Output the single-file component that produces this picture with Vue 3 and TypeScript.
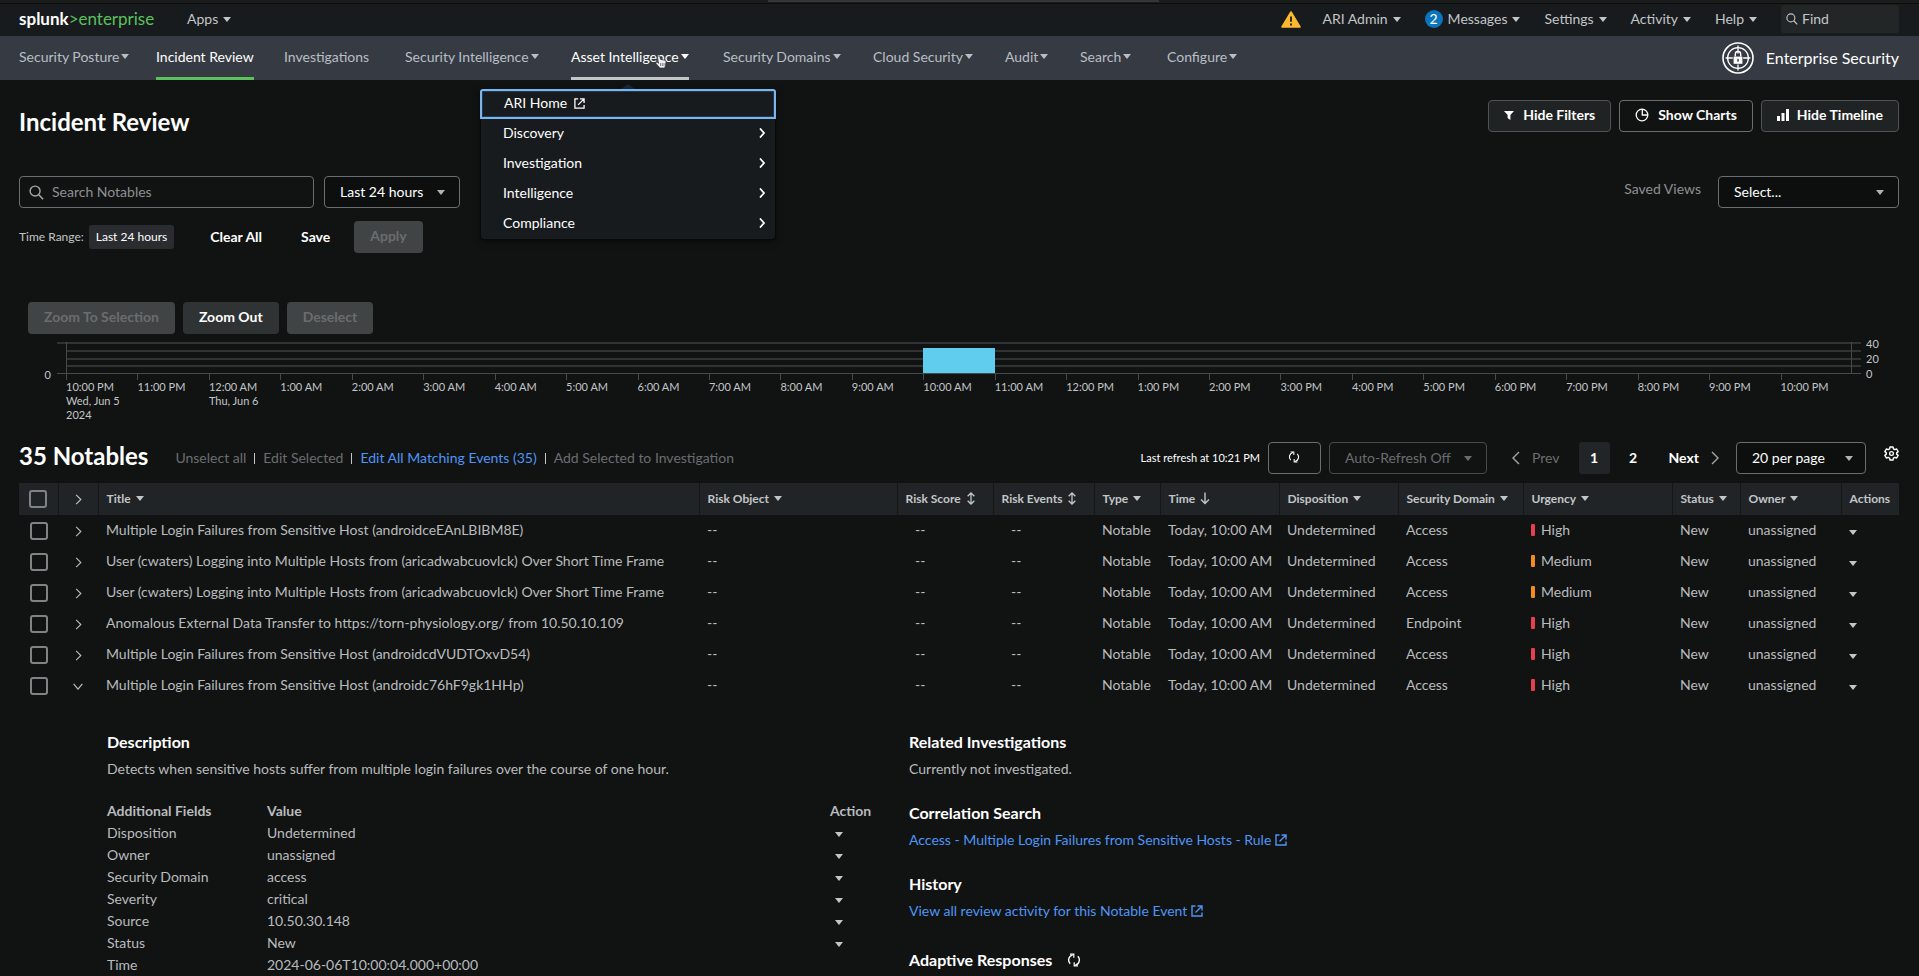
<script setup lang="ts">
import { ref } from 'vue'

interface MenuEntry { label: string; caret: boolean; state?: 'current' | 'open' }
interface Notable { title: string; domain: string; urgency: 'High' | 'Medium'; open?: boolean }
interface Column { label: string; sort?: 'caret' | 'both' | 'down' }

const accountMenus: string[] = ['Settings', 'Activity', 'Help']

const appMenus: MenuEntry[] = [
  { label: 'Security Posture', caret: true },
  { label: 'Incident Review', caret: false, state: 'current' },
  { label: 'Investigations', caret: false },
  { label: 'Security Intelligence', caret: true },
  { label: 'Asset Intelligence', caret: true, state: 'open' },
  { label: 'Security Domains', caret: true },
  { label: 'Cloud Security', caret: true },
  { label: 'Audit', caret: true },
  { label: 'Search', caret: true },
  { label: 'Configure', caret: true },
]

const submenu: string[] = ['Discovery', 'Investigation', 'Intelligence', 'Compliance']

const hours: string[][] = Array.from({ length: 25 }, (_, i) => {
  const h = (22 + i) % 24
  const label = `${h % 12 === 0 ? 12 : h % 12}:00 ${h < 12 ? 'AM' : 'PM'}`
  if (i === 0) return [label, 'Wed, Jun 5', '2024']
  if (i === 2) return [label, 'Thu, Jun 6']
  return [label]
})
const bar = { hour: 12, count: 32, max: 40 }

const columns: Column[] = [
  { label: 'Title', sort: 'caret' },
  { label: 'Risk Object', sort: 'caret' },
  { label: 'Risk Score', sort: 'both' },
  { label: 'Risk Events', sort: 'both' },
  { label: 'Type', sort: 'caret' },
  { label: 'Time', sort: 'down' },
  { label: 'Disposition', sort: 'caret' },
  { label: 'Security Domain', sort: 'caret' },
  { label: 'Urgency', sort: 'caret' },
  { label: 'Status', sort: 'caret' },
  { label: 'Owner', sort: 'caret' },
  { label: 'Actions' },
]

const notables: Notable[] = [
  { title: 'Multiple Login Failures from Sensitive Host (androidceEAnLBIBM8E)', domain: 'Access', urgency: 'High' },
  { title: 'User (cwaters) Logging into Multiple Hosts from (aricadwabcuovlck) Over Short Time Frame', domain: 'Access', urgency: 'Medium' },
  { title: 'User (cwaters) Logging into Multiple Hosts from (aricadwabcuovlck) Over Short Time Frame', domain: 'Access', urgency: 'Medium' },
  { title: 'Anomalous External Data Transfer to https://torn-physiology.org/ from 10.50.10.109', domain: 'Endpoint', urgency: 'High' },
  { title: 'Multiple Login Failures from Sensitive Host (androidcdVUDTOxvD54)', domain: 'Access', urgency: 'High' },
  { title: 'Multiple Login Failures from Sensitive Host (androidc76hF9gk1HHp)', domain: 'Access', urgency: 'High', open: true },
]

const fields: [string, string][] = [
  ['Disposition', 'Undetermined'],
  ['Owner', 'unassigned'],
  ['Security Domain', 'access'],
  ['Severity', 'critical'],
  ['Source', '10.50.30.148'],
  ['Status', 'New'],
  ['Time', '2024-06-06T10:00:04.000+00:00'],
]

const search = ref('')
const find = ref('')
</script>

<template>
  <svg class="sprite" aria-hidden="true">
    <symbol id="i-search" viewBox="0 0 16 16"><circle cx="6.5" cy="6.5" r="5.3" fill="none" stroke="currentColor" stroke-width="1.5" /><path d="M10.4 10.4 15 15.2" stroke="currentColor" stroke-width="1.7" /></symbol>
    <symbol id="i-right" viewBox="0 0 8 14"><path d="M1 1l6 6-6 6" fill="none" stroke="currentColor" stroke-width="1.4" /></symbol>
    <symbol id="i-right-bold" viewBox="0 0 6 10"><path d="M1 0.500l4 4.500-4 4.500" fill="none" stroke="currentColor" stroke-width="1.800" /></symbol>
    <symbol id="i-left" viewBox="0 0 8 14"><path d="M7 1L1 7l6 6" fill="none" stroke="currentColor" stroke-width="1.4" /></symbol>
    <symbol id="i-down" viewBox="0 0 12 8"><path d="M1 1l5 6 5-6" fill="none" stroke="currentColor" stroke-width="1.4" /></symbol>
    <symbol id="i-external" viewBox="0 0 12 12"><path d="M4.5 1H1v10h10V7.5M6.5 1H11v4.5M11 1 4.5 7.5" fill="none" stroke="currentColor" stroke-width="1.4" /></symbol>
    <symbol id="i-refresh" viewBox="0 0 14 14"><path d="M8.3 12.2A5.3 5.3 0 0 0 10.8 3.3M5.7 1.8A5.3 5.3 0 0 0 3.2 10.7" fill="none" stroke="currentColor" stroke-width="1.3" /><path d="M3 1.2h3.8v3.6M11 12.8H7.2V9.2" fill="none" stroke="currentColor" stroke-width="1.2" /></symbol>
    <symbol id="i-both" viewBox="0 0 10 14"><path d="M5 1v12M1.4 4.6 5 1l3.6 3.6M1.4 9.4 5 13l3.6-3.6" fill="none" stroke="currentColor" stroke-width="1.4" /></symbol>
    <symbol id="i-arrow" viewBox="0 0 10 12"><path d="M5 0v11M1 7l4 4 4-4" fill="none" stroke="currentColor" stroke-width="1.4" /></symbol>
    <symbol id="i-gear" viewBox="0 0 16 16"><path d="M6.4 1h3.2l.4 2 1.5.9 2-.7 1.6 2.8-1.6 1.3v1.4l1.6 1.3-1.6 2.8-2-.7-1.5.9-.4 2H6.4l-.4-2-1.500-.9-2 .7L.9 10l1.600-1.300V7.300L.9 6l1.600-2.800 2 .7L6 3z" fill="none" stroke="currentColor" stroke-width="1.5" stroke-linejoin="round" /><circle cx="8" cy="8" r="2" fill="none" stroke="currentColor" stroke-width="1.4" /></symbol>
  </svg>

  <div class="strip"><span class="strip-tab"></span></div>

  <header class="topbar">
    <a class="logo" href="#"><b>splunk</b><span>&gt;enterprise</span></a>
    <button class="menu" type="button">Apps <i class="caret"></i></button>
    <div class="account">
      <svg class="warning" viewBox="0 0 20 17" role="img" aria-label="Warning"><path d="M10 1 19 16H1z" fill="#fdb92e" stroke="#fdb92e" stroke-width="1.6" stroke-linejoin="round" /><path d="M10 5.5v5.2M10 12.4v2" stroke="#22262a" stroke-width="1.9" /></svg>
      <button class="menu" type="button">ARI Admin <i class="caret"></i></button>
      <button class="menu" type="button"><span class="badge">2</span>Messages <i class="caret"></i></button>
      <button v-for="m in accountMenus" :key="m" class="menu" type="button">{{ m }} <i class="caret"></i></button>
      <label class="find"><svg class="ic12"><use href="#i-search" /></svg><input v-model="find" type="text" placeholder="Find" aria-label="Find" /></label>
    </div>
  </header>

  <nav class="appbar">
    <ul class="tabs">
      <li v-for="m in appMenus" :key="m.label" :class="['tab', m.state]">
        <a href="#">{{ m.label }}<i v-if="m.caret" class="caret"></i></a>
        <div v-if="m.state === 'open'" class="dropdown">
          <a class="drop-home" href="#">ARI Home <svg class="ic11"><use href="#i-external" /></svg></a>
          <button v-for="s in submenu" :key="s" class="drop-item" type="button">{{ s }}<svg class="chev-s"><use href="#i-right-bold" /></svg></button>
        </div>
        <svg v-if="m.state === 'open'" class="pointer" viewBox="0 0 12 14" aria-hidden="true"><path d="M3.2 1.2c.7-.5 1.4-.1 1.7.6l.7 2.6 4.3.9c.8.2 1.2.8 1.1 1.6l-.6 4L9.6 13H4.9L1 8.4c-.4-.7.5-1.5 1.3-1l1.3.9L2.6 2.3c-.1-.5.1-.9.6-1.1z" fill="#f2f2f2" stroke="#33373c" stroke-width=".7" /><path d="M5.6 8v3M7.3 8v3M9 8v3" stroke="#555" stroke-width=".7" /></svg>
      </li>
    </ul>
    <a class="product" href="#">
      <svg class="product-icon" viewBox="0 0 32 32" fill="none" stroke="#fff"><circle cx="16" cy="16" r="15" stroke-width="1.6" /><circle cx="16" cy="16" r="10.4" stroke-width="1.3" /><path d="M16 3.6v8M16 22v6.4M3.6 16H12M20 16h8.4" stroke-width="1.3" /><rect x="10.8" y="12" width="10.4" height="10.5" fill="#363b43" stroke="none" /><path d="M13.3 14.6v-2.4a2.7 2.7 0 0 1 5.4 0v2.4" stroke-width="1.4" /><rect x="11.6" y="14.6" width="8.8" height="7.2" fill="#fff" stroke="none" /><path d="M16 16.8v3" stroke="#363b43" stroke-width="1.4" /></svg>
      Enterprise Security
    </a>
  </nav>

  <main class="page">
    <div class="head">
      <h1>Incident Review</h1>
      <div class="head-actions">
        <button class="btn soft" type="button"><svg class="ic10" viewBox="0 0 10 10"><path d="M0 1h10L6.4 5v5L3.6 8V5z" fill="currentColor" /></svg>Hide Filters</button>
        <button class="btn" type="button"><svg class="ic14" viewBox="0 0 14 14"><circle cx="7" cy="7" r="5.800" fill="none" stroke="currentColor" stroke-width="1.300" /><path d="M7.300 1v6h5.600" fill="none" stroke="currentColor" stroke-width="1.300" /></svg>Show Charts</button>
        <button class="btn soft tight" type="button"><svg class="ic12" viewBox="0 0 12 12"><path d="M0 7h3v5H0zM4.5 4h3v8h-3zM9 0h3v12H9z" fill="currentColor" /></svg>Hide Timeline</button>
      </div>
    </div>

    <div class="filters">
      <label class="search"><svg class="ic15"><use href="#i-search" /></svg><input v-model="search" type="text" placeholder="Search Notables" aria-label="Search Notables" /></label>
      <span class="select range"><select aria-label="Time range"><option>Last 24 hours</option></select><i class="caret"></i></span>
      <label class="saved-label" for="saved">Saved Views</label>
      <span class="select saved"><select id="saved"><option>Select...</option></select><i class="caret"></i></span>
    </div>

    <div class="applied">
      <span class="small">Time Range:</span>
      <span class="chip">Last 24 hours</span>
      <button class="plain clear" type="button">Clear All</button>
      <button class="plain" type="button">Save</button>
      <button class="btn flat apply" type="button" disabled>Apply</button>
    </div>

    <section class="timeline">
      <div class="zoom">
        <button class="btn flat" type="button" disabled>Zoom To Selection</button>
        <button class="btn flat on" type="button">Zoom Out</button>
        <button class="btn flat" type="button" disabled>Deselect</button>
      </div>
      <div class="chart">
        <span class="zero">0</span>
        <div class="bands stub"><i></i></div>
        <div class="plot">
          <div class="bands"><i></i><i></i><i></i><i></i></div>
          <div class="bars"><span class="bar" :style="{ gridColumn: bar.hour + 1, height: (bar.count / bar.max) * 100 + '%' }"></span></div>
        </div>
        <div class="bands"><i></i><i></i><i></i><i></i></div>
        <div class="scale"><span>40</span><span>20</span><span>0</span></div>
        <ol class="hours">
          <li v-for="(lines, i) in hours" :key="i"><span v-for="l in lines" :key="l">{{ l }}</span></li>
        </ol>
      </div>
    </section>

    <div class="toolbar">
      <h2>35 Notables</h2>
      <div class="bulk">
        <button type="button" disabled>Unselect all</button><i class="sep"></i>
        <button type="button" disabled>Edit Selected</button><i class="sep"></i>
        <a href="#">Edit All Matching Events (35)</a><i class="sep"></i>
        <button type="button" disabled>Add Selected to Investigation</button>
      </div>
      <span class="last">Last refresh at 10:21 PM</span>
      <button class="btn refresh" type="button" aria-label="Refresh"><svg class="ic12"><use href="#i-refresh" /></svg></button>
      <span class="select auto"><select aria-label="Auto refresh" disabled><option>Auto-Refresh Off</option></select><i class="caret"></i></span>
      <div class="pager">
        <button class="prev" type="button" disabled><svg class="chev"><use href="#i-left" /></svg>Prev</button>
        <button class="num on" type="button">1</button>
        <button class="num" type="button">2</button>
        <button class="next" type="button">Next<svg class="chev"><use href="#i-right" /></svg></button>
      </div>
      <span class="select per"><select aria-label="Rows per page"><option>20 per page</option></select><i class="caret"></i></span>
      <button class="gear" type="button" aria-label="Table settings"><svg class="ic15"><use href="#i-gear" /></svg></button>
    </div>

    <table class="notables">
      <colgroup>
        <col class="w39" /><col class="w40" /><col /><col class="w198" /><col class="w96" /><col class="w101" /><col class="w66" /><col class="w119" /><col class="w119" /><col class="w125" /><col class="w149" /><col class="w68" /><col class="w101" /><col class="w58" />
      </colgroup>
      <thead>
        <tr>
          <th class="mid"><input type="checkbox" aria-label="Select all notables" /></th>
          <th class="mid"><button class="expand" type="button" aria-label="Expand all"><svg class="chev-r"><use href="#i-right" /></svg></button></th>
          <th v-for="c in columns" :key="c.label" scope="col">
            <span class="th">{{ c.label }}
              <i v-if="c.sort === 'caret'" class="caret"></i>
              <svg v-else-if="c.sort === 'both'" class="sort"><use href="#i-both" /></svg>
              <svg v-else-if="c.sort === 'down'" class="sort"><use href="#i-arrow" /></svg>
            </span>
          </th>
        </tr>
      </thead>
      <tbody>
        <tr v-for="(n, i) in notables" :key="i">
          <td class="mid"><input type="checkbox" :aria-label="'Select ' + n.title" /></td>
          <td class="mid">
            <button class="expand" type="button" :aria-label="'Toggle ' + n.title">
              <svg v-if="n.open" class="chev-d"><use href="#i-down" /></svg>
              <svg v-else class="chev-r"><use href="#i-right" /></svg>
            </button>
          </td>
          <td>{{ n.title }}</td>
          <td>--</td>
          <td class="score">--</td>
          <td class="score">--</td>
          <td>Notable</td>
          <td>Today, 10:00 AM</td>
          <td>Undetermined</td>
          <td>{{ n.domain }}</td>
          <td><span class="urgency"><i :class="['level', n.urgency.toLowerCase()]"></i>{{ n.urgency }}</span></td>
          <td>New</td>
          <td>unassigned</td>
          <td><button class="row-action" type="button" aria-label="Row actions"><i class="caret"></i></button></td>
        </tr>
      </tbody>
    </table>

    <section class="detail">
      <div>
        <h3>Description</h3>
        <p>Detects when sensitive hosts suffer from multiple login failures over the course of one hour.</p>
        <table class="fields">
          <colgroup><col class="w160" /><col /><col class="w79" /></colgroup>
          <thead><tr><th scope="col">Additional Fields</th><th scope="col">Value</th><th scope="col">Action</th></tr></thead>
          <tbody>
            <tr v-for="f in fields" :key="f[0]">
              <td>{{ f[0] }}</td>
              <td>{{ f[1] }}</td>
              <td><button v-if="f[0] !== 'Time'" class="field-action" type="button" :aria-label="f[0] + ' actions'"><i class="caret"></i></button></td>
            </tr>
          </tbody>
        </table>
      </div>
      <div>
        <h3>Related Investigations</h3>
        <p>Currently not investigated.</p>
        <h3>Correlation Search</h3>
        <p><a href="#">Access - Multiple Login Failures from Sensitive Hosts - Rule <svg class="ic12"><use href="#i-external" /></svg></a></p>
        <h3>History</h3>
        <p><a href="#">View all review activity for this Notable Event <svg class="ic12"><use href="#i-external" /></svg></a></p>
        <h3 class="adaptive">Adaptive Responses <button class="expand" type="button" aria-label="Refresh responses"><svg class="ic14"><use href="#i-refresh" /></svg></button></h3>
      </div>
    </section>
  </main>
</template>

<style>
html { background: #111313; scrollbar-width: none; }
body, button, input, select { font: 14px/20px Lato, "Liberation Sans", sans-serif; color: #c3c6c8; }
</style>

<style scoped>
* { box-sizing: border-box; }
button { background: none; border: 0; padding: 0; white-space: nowrap; }
a { color: inherit; text-decoration: none; }
h1, h2, h3, p, ul, ol { margin: 0; padding: 0; }
ul, ol { list-style: none; }
.sprite { position: absolute; width: 0; height: 0; }
svg { display: block; flex: none; overflow: visible; }
.ic10 { width: 10px; height: 10px; }
.ic11 { width: 11px; height: 11px; }
.ic12 { width: 12px; height: 12px; }
.ic14 { width: 14px; height: 14px; }
.ic15 { width: 15px; height: 15px; }
.chev { width: 8px; height: 14px; }
.chev-r { width: 7px; height: 11px; }
.chev-s { width: 6px; height: 10px; color: #fff; }
.chev-d { width: 12px; height: 7px; }
.caret { display: inline-block; flex: none; border: 4px solid transparent; border-top: 5px solid currentColor; border-bottom: 0; }

.strip { height: 4px; background: #1b1c1c; border-bottom: 1px solid #0b0d0d; padding-left: 40%; }
.strip-tab { display: block; width: 34%; height: 2px; background: #343536; }
.topbar { display: flex; align-items: center; height: 32px; padding: 0 20px 2px 19px; background: #171b1d; }
.logo { width: 168px; font-size: 17px; color: #5cc05c; }
.logo b { color: #fff; }
.menu { display: flex; align-items: center; gap: 5px; }
.account { display: flex; align-items: center; gap: 24px; margin-left: auto; }
.account > .warning { width: 20px; height: 17px; margin-right: -3px; }
.badge { width: 18px; height: 18px; border-radius: 9px; background: #0a74bd; color: #fff; line-height: 18px; }
.find { display: flex; align-items: center; gap: 4px; width: 118px; height: 28px; padding: 0 5px; background: #222627; border-radius: 3px; }
.find input { width: 100%; min-width: 0; padding: 0; border: 0; background: none; outline: 0; }
.find input::placeholder { color: #c3c6c8; opacity: 1; }

.appbar { display: flex; justify-content: space-between; align-items: stretch; height: 44px; padding: 0 20px 0 19px; background: #363b43; color: #b9bec5; }
.tabs { display: grid; grid-template-columns: 137px 128px 121px 166px 152px 150px 132px 75px 87px auto; }
.tab { position: relative; justify-self: start; border-bottom: 3px solid transparent; white-space: nowrap; }
.tab > a { display: flex; align-items: center; gap: 2px; height: 41px; }
.current { border-color: #5cc05c; color: #fff; }
.open { border-color: #c3c6c8; color: #fff; }
.pointer { position: absolute; left: 84px; top: 19px; width: 12px; height: 14px; }
.dropdown { position: absolute; z-index: 2; top: 53px; left: -91px; width: 296px; background: #171b1e; border: 1px solid #080a0b; border-top: 0; border-radius: 4px; box-shadow: 0 2px 6px #0008; }
.dropdown::before { content: ""; position: absolute; left: 50%; top: -5px; margin-left: -7px; border: 7px solid transparent; border-top: 0; border-bottom: 5px solid #152638; }
.drop-home { display: flex; align-items: center; gap: 7px; position: relative; height: 30px; margin: 0 -1px; padding: 0 0 2px 22px; border: 2px solid #7fb5e6; border-radius: 3px 3px 0 0; background: #171b1e; box-shadow: inset 0 0 0 1px #173a5e; }
.drop-item { display: flex; justify-content: space-between; align-items: center; width: 100%; height: 30px; padding: 0 10px 2px 22px; color: #fff; }
.product { display: flex; align-items: center; gap: 12px; font-size: 16px; color: #fff; }
.product-icon { width: 32px; height: 32px; }

.page { padding: 20px 20px 0 19px; }
.head { display: flex; justify-content: space-between; align-items: flex-start; }
h1 { font-size: 24px; line-height: 44px; color: #fff; }
.head-actions { display: flex; gap: 8px; }
.btn { display: flex; align-items: center; justify-content: center; gap: 9px; height: 32px; padding: 0 15px 2px; border: 1px solid #6b6e70; border-radius: 4px; color: #fff; font-weight: 700; }
.btn.soft { background: #1f2324; border-color: #505355; }
.btn.tight { gap: 8px; }
.btn.flat { padding: 0 16px 2px; border: 0; background: #2f3334; }
.btn.flat:disabled { background: #414445; color: #6a6d6f; }

.filters { display: flex; align-items: flex-start; margin-top: 32px; }
.search { display: flex; align-items: center; gap: 8px; width: 295px; height: 32px; padding: 0 9px; border: 1px solid #6b6e70; border-radius: 4px; color: #a3a6a8; }
.search input { flex: 1; min-width: 0; padding: 0; border: 0; background: none; outline: 0; }
.search input::placeholder { color: #8d9092; opacity: 1; }
.select { display: flex; align-items: center; position: relative; }
.select select { appearance: none; width: 100%; height: 32px; padding: 0 15px 1px; border: 1px solid #6b6e70; border-radius: 4px; background: #0d0f0f; color: #fff; opacity: 1; }
.select .caret { position: absolute; right: 15px; color: #b0b2b4; pointer-events: none; }
.range { width: 136px; margin-left: 10px; }
.saved-label { margin-left: auto; line-height: 26px; color: #8d9092; }
.saved { width: 181px; margin-left: 17px; }
.applied { display: flex; align-items: center; height: 32px; margin-top: 13px; }
.small { font-size: 12px; }
.chip { margin-left: 5px; padding: 0 7px; background: #2a2c2f; border-radius: 3px; color: #fff; font-size: 12px; line-height: 24px; }
.plain { font-weight: 700; color: #fff; margin-left: 39px; }
.plain.clear { margin-left: 36px; }
.apply { margin-left: 24px; }

.timeline { margin-top: 49px; }
.zoom { display: flex; gap: 8px; margin-left: 9px; }
.chart { display: grid; grid-template-columns: 38px 9px 1fr 9px 38px; margin-top: 8px; font-size: 11px; line-height: 14px; }
.zero { align-self: end; text-align: right; padding-right: 6px; margin-bottom: -8px; }
.bands { display: flex; flex-direction: column; height: 32px; border-bottom: 1px solid #47494a; }
.bands i { flex: 1; border-top: 2px solid #303233; }
.plot { display: grid; border: 1px solid #47494a; border-width: 0 1px; }
.plot > * { grid-area: 1 / 1; }
.bars, .hours { display: grid; grid-template-columns: repeat(25, 1fr); }
.bars { align-items: end; height: 31px; }
.bar { background: #60cdee; }
.scale { display: flex; flex-direction: column; justify-content: space-between; height: 44px; margin-top: -5px; margin-bottom: -7px; padding-left: 5px; }
.hours { grid-column: 3; min-height: 48px; }
.hours li { display: flex; flex-direction: column; white-space: nowrap; }
.hours li::before { content: ""; height: 6px; border-left: 1px solid #47494a; }

.toolbar { display: flex; align-items: center; height: 32px; margin-top: 20px; white-space: nowrap; }
h2 { align-self: flex-start; font-size: 24px; line-height: 28px; color: #fff; }
.bulk { display: flex; align-items: center; margin-left: 27px; }
.bulk a, .detail a { color: #4f95f5; }
.bulk button:disabled { color: #6a6d6f; }
.sep { width: 1px; height: 11px; margin: 0 8px; background: #c3c6c8; }
.last { margin-left: auto; font-size: 11px; color: #fff; }
.refresh { width: 53px; margin: 0 8px; }
.auto { width: 158px; }
.auto select { border-color: #47494a; background: none; color: #6a6d6f; }
.auto .caret { color: #6a6d6f; }
.per .caret { right: 13px; }
.pager { display: flex; align-items: center; margin-left: 25px; }
.pager button { display: flex; align-items: center; justify-content: center; gap: 12px; height: 32px; color: #fff; font-weight: 700; }
.pager .prev { color: #6a6d6f; font-weight: 400; margin-right: 19px; }
.pager .num { width: 31px; margin-right: 8px; border-radius: 3px; }
.pager .num.on { background: #222527; }
.pager .next { margin-left: 12px; }
.pager .chev { color: #a3a6a8; }
.per { width: 130px; margin-left: 17px; }
.gear { margin-left: 18px; align-self: flex-start; color: #fff; padding-top: 4px; }

table { width: 100%; border-collapse: collapse; table-layout: fixed; }
.notables { margin-top: 9px; }
th, td { padding: 0; text-align: left; font-weight: 400; white-space: nowrap; }
.notables th, .notables td { padding: 0 0 1px 8px; }
.notables th { height: 32px; background: #212427; border-left: 1px solid #141618; font-size: 12px; font-weight: 700; }
.notables th:first-child { border-left: 0; }
.notables td { height: 31px; color: #b9bbbd; }
.notables .mid { padding: 0; text-align: center; }
.notables .score { padding-left: 18px; }
.th { display: flex; align-items: center; gap: 5px; }
.sort { width: 10px; height: 13px; }
.mid input { appearance: none; display: block; width: 18px; height: 18px; margin: 0 auto; border: 2px solid #808385; border-radius: 3px; }
.expand { display: inline-flex; align-items: center; justify-content: center; color: inherit; vertical-align: middle; }
.urgency { display: flex; align-items: center; gap: 6px; }
.level { width: 4px; height: 12px; border-radius: 1px; background: #e8404a; }
.level.medium { background: #f28c1e; }
.row-action, .field-action { display: flex; padding: 4px 0 0; }
.w39 { width: 39px; } .w40 { width: 40px; } .w58 { width: 58px; } .w66 { width: 66px; } .w68 { width: 68px; }
.w79 { width: 79px; } .w96 { width: 96px; } .w101 { width: 101px; } .w119 { width: 119px; } .w125 { width: 125px; }
.w149 { width: 149px; } .w160 { width: 160px; } .w198 { width: 198px; }

.detail { display: grid; grid-template-columns: 802fr 990fr; padding: 29px 0 0 88px; color: #b9bbbd; }
h3 { margin-top: 22px; font-size: 16px; line-height: 24px; color: #fff; }
h3:first-child { margin-top: 0; }
p { margin-top: 5px; }
p a { display: inline-flex; align-items: center; gap: 4px; vertical-align: top; }
.adaptive { display: flex; align-items: center; gap: 15px; line-height: 34px; }
.fields { margin-top: 21px; }
.fields th { font-weight: 700; height: 22px; }
.fields td { height: 22px; }
.field-action { padding: 2px 0 0 5px; }
</style>
